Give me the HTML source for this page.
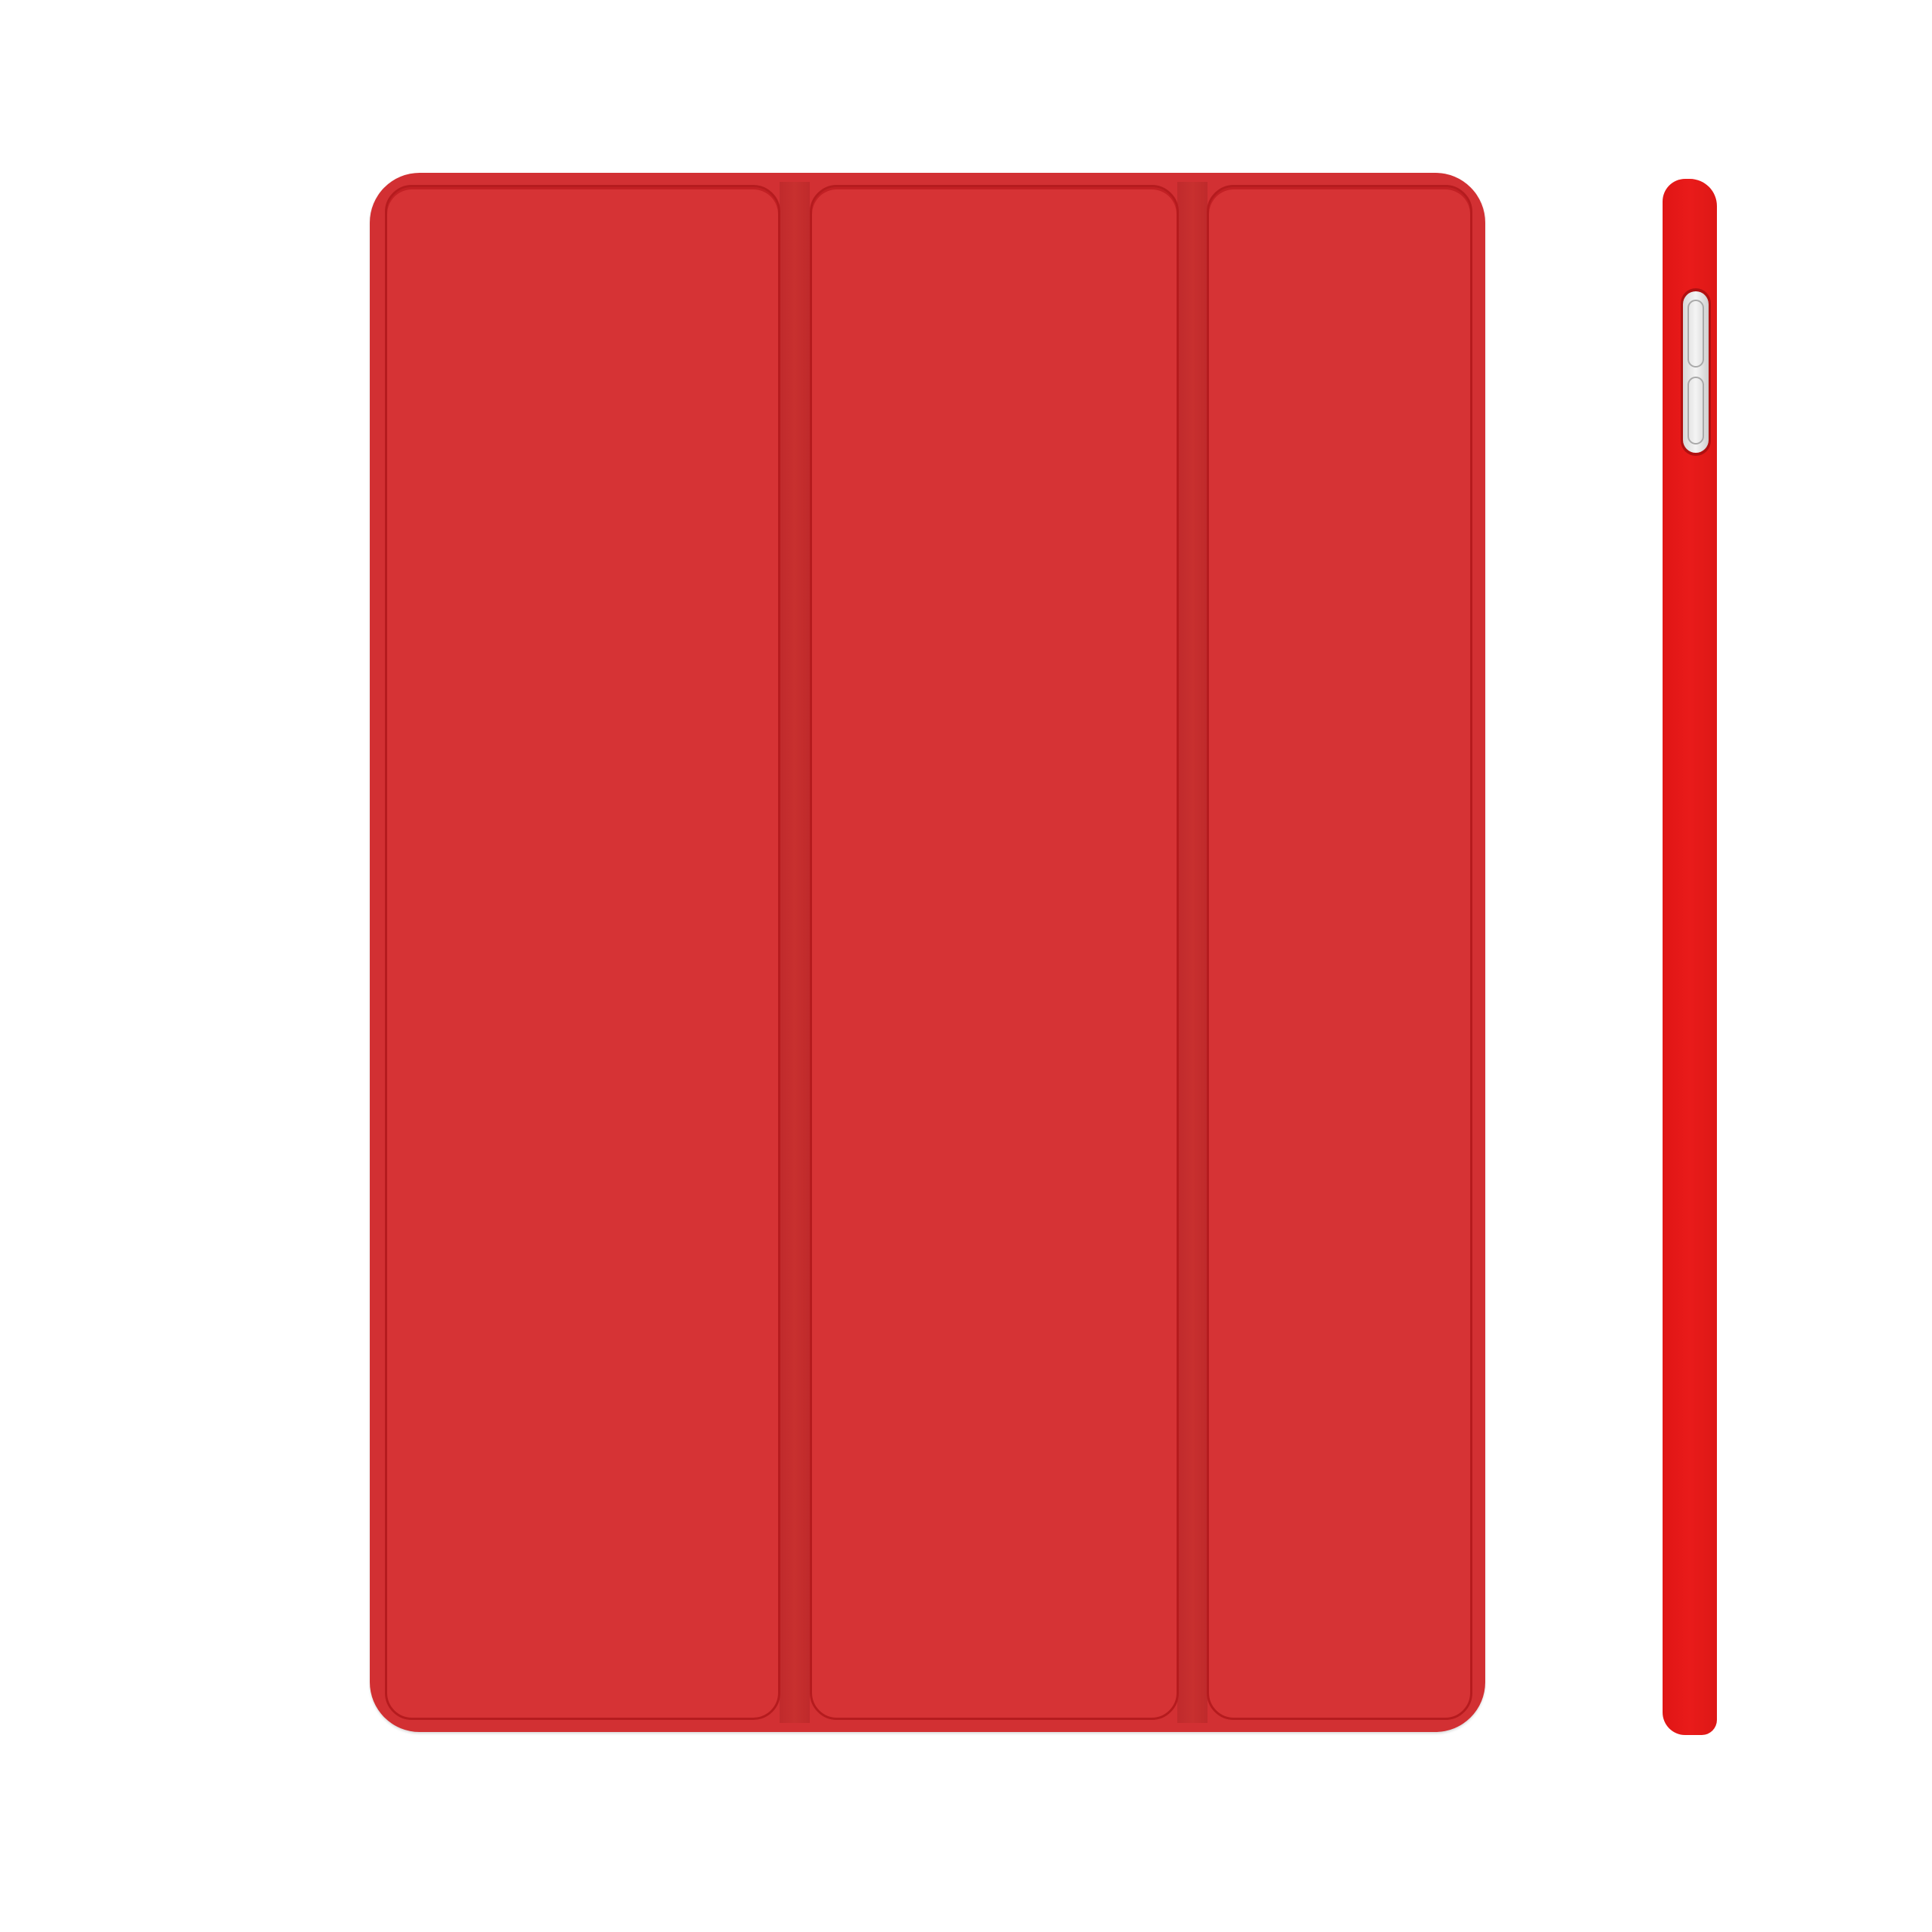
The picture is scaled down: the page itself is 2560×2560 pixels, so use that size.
<!DOCTYPE html>
<html><head><meta charset="utf-8"><style>
html,body{margin:0;padding:0;background:#fff;width:2560px;height:2560px;overflow:hidden;position:relative}
div{position:absolute;box-sizing:border-box}
.case{left:490px;top:229px;width:1478px;height:2066px;background:#d23033;border-radius:66px;box-shadow:0 2px 3px rgba(0,0,0,.15)}
.groove{top:12px;bottom:12px;width:40px;background:linear-gradient(90deg,#c02a2c,#c8302f,#bf2a2b)}
.panel{top:16px;bottom:16px;background:#d63335;border:3px solid #b51b1e;border-radius:36px;box-shadow:inset 0 3px 0 #c22024}
.side{left:2203px;top:237px;width:72px;height:2062px;background:linear-gradient(90deg,#e01515,#e91b1a 50%,#dd1816);border-radius:30px 36px 20px 30px}
</style></head><body>
<div class="case">
  <div class="groove" style="left:543px"></div>
  <div class="groove" style="left:1070px"></div>
  <div class="panel" style="left:20px;width:524px"></div>
  <div class="panel" style="left:583px;width:489px"></div>
  <div class="panel" style="left:1109px;width:352px"></div>
</div>
<div class="side">
  <div style="left:24px;top:145px;width:40px;height:222px;border-radius:20px;background:#b01010"></div>
  <div style="left:27px;top:149px;width:34px;height:214px;border-radius:17px;background:linear-gradient(90deg,#d8d8d8,#f4f4f4 50%,#cfcfcf)"></div>
  <div style="left:33px;top:160px;width:22px;height:90px;border-radius:11px;border:2px solid #a9a9a9"></div>
  <div style="left:33px;top:262px;width:22px;height:90px;border-radius:11px;border:2px solid #a9a9a9"></div>
</div>
</body></html>
